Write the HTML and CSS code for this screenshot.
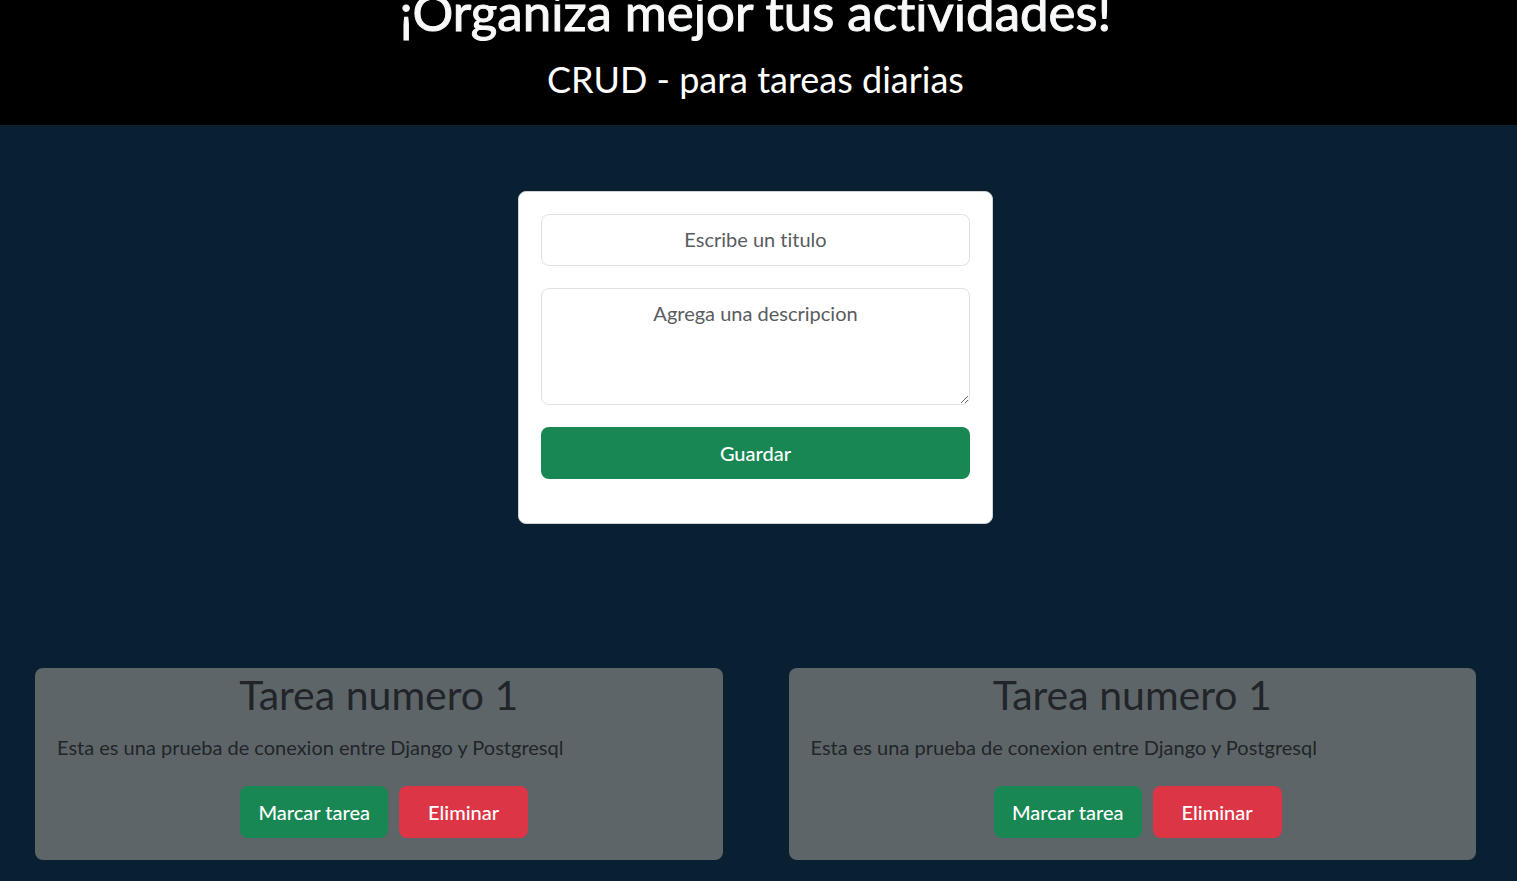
FILE: index.html
```html
<!DOCTYPE html>
<html lang="es">
<head>
<meta charset="utf-8">
<meta name="viewport" content="width=device-width, initial-scale=1">
<title>CRUD - para tareas diarias</title>
<link rel="stylesheet" href="styles.css">
</head>
<body>
<header class="hero">
  <h1 class="hero-title">¡Organiza mejor tus actividades!</h1>
  <h2 class="hero-subtitle">CRUD - para tareas diarias</h2>
</header>
<main class="page">
  <form class="task-form">
    <input class="field" type="text" name="titulo" placeholder="Escribe un titulo" aria-label="Titulo">
    <textarea class="field field-area" name="descripcion" placeholder="Agrega una descripcion" aria-label="Descripcion"></textarea>
    <button class="btn btn-success" type="button">Guardar</button>
  </form>
  <section class="tasks">
    <article class="task">
      <h3 class="task-title">Tarea numero 1</h3>
      <p class="task-text">Esta es una prueba de conexion entre Django y Postgresql</p>
      <div class="task-actions">
        <button class="btn btn-success" type="button">Marcar tarea</button>
        <button class="btn btn-danger" type="button">Eliminar</button>
      </div>
    </article>
    <article class="task">
      <h3 class="task-title">Tarea numero 1</h3>
      <p class="task-text">Esta es una prueba de conexion entre Django y Postgresql</p>
      <div class="task-actions">
        <button class="btn btn-success" type="button">Marcar tarea</button>
        <button class="btn btn-danger" type="button">Eliminar</button>
      </div>
    </article>
  </section>
</main>
</body>
</html>
```
FILE: styles.css
```css
* {
  box-sizing: border-box;
}

body {
  margin: 0;
  background: #091f32;
  color: #212529;
  font-family: "Gill Sans", "Gill Sans MT", Lato, sans-serif;
  font-size: 20px;
  font-variant-ligatures: none;
  line-height: 34px;
}

h1, h2, h3, p {
  margin: 0;
  font-weight: 400;
}

.hero {
  padding: 0 6px 22px 0;
  overflow: hidden;
  background: #000;
  color: #fff;
  text-align: center;
}

.hero-title {
  margin-bottom: 32px;
  color: #f8f9fa;
  font-size: 51px;
  line-height: 24px;
  -webkit-text-stroke: 1px #f8f9fa;
}

.hero-subtitle {
  font-size: 36px;
  line-height: 47px;
}

.page {
  padding: 66px 41px 21px 35px;
}

.task-form {
  display: flex;
  flex-direction: column;
  gap: 22px;
  max-width: 475px;
  margin: 0 auto 144px;
  padding: 22px 22px 44px;
  border: 1px solid #ced2d6;
  border-radius: 8px;
  background: #fff;
}

.field {
  width: 100%;
  padding: 7px 17px 9px;
  border: 1px solid #dee2e6;
  border-radius: 8px;
  background: #fff;
  color: #212529;
  font: inherit;
  font-variant-ligatures: none;
  text-align: center;
}

.field::placeholder {
  color: #595c5f;
  opacity: 1;
}

.field-area {
  display: block;
  height: 117px;
  resize: vertical;
}

.btn {
  padding: 9px 18px;
  border: 0;
  border-radius: 8px;
  color: #fff;
  font: inherit;
  font-weight: 500;
  cursor: pointer;
}

.btn-success {
  background: #198754;
}

.btn-danger {
  padding: 9px 29px;
  background: #dc3545;
}

.tasks {
  display: grid;
  grid-template-columns: repeat(2, minmax(0, 1fr));
  gap: 66px;
}

.task {
  padding: 0 22px 22px;
  border-radius: 8px;
  background: #5e6568;
}

.task-title {
  margin-bottom: 9px;
  font-size: 41px;
  line-height: 53px;
  text-align: center;
}

.task-text {
  margin-bottom: 22px;
}

.task-actions {
  display: flex;
  justify-content: center;
  gap: 11px;
  padding-left: 11px;
}

@media (max-width: 800px) {
  .tasks {
    grid-template-columns: 1fr;
  }
}
```
